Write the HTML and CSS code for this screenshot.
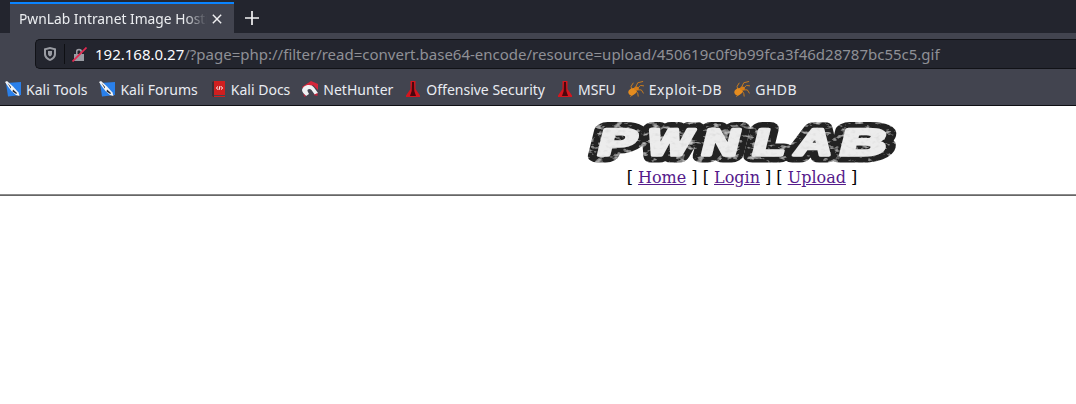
FILE: index.html
```html
<!DOCTYPE html>
<html lang="en">
<head>
<meta charset="utf-8">
<title>PwnLab Intranet Image Hosting</title>
<link rel="stylesheet" href="styles.css">
</head>
<body>
<svg class="defs" width="0" height="0" aria-hidden="true">
  <defs>
    <symbol id="kali" viewBox="0 0 16 16">
      <path d="M1 2 16 1 16 14 3 15.500Z" fill="#2a80ea"/>
      <path d="M0 1 2 0 8 5.500 13.500 11.500 14.500 15 11 14 6.500 10 3 5.500Z" fill="#f2f4f6"/>
      <path d="M2.500 2 6 6 5.800 7.500Z M8 8.500 12 12 11.300 13 7.500 10.500Z" fill="#23252e"/>
    </symbol>
    <symbol id="book" viewBox="0 0 16 16">
      <path d="M2 1 4 0H15V14H4V15H15V16H3L2 15Z" fill="#cf1f1f"/>
      <path d="M2 1 4 0V16H3L2 15Z" fill="#3a2e36"/>
      <path d="M8 5.500 6.300 7 8 8.500M11 5.500 12.700 7 11 8.500M10 5 9 9" fill="none" stroke="#fff" stroke-width="1"/>
    </symbol>
    <symbol id="hunter" viewBox="0 0 16 16">
      <path d="M0 6 9 0 16 3 16 9 11 4 3 9Z" fill="#d6263a"/>
      <path d="M0 9C1 4 9 2 12 6.500L16 12 13 14 9.500 9C8 7 5 8 5.500 10L7 13 4 15C2 13 0 11 0 9Z" fill="#f0f1f3"/>
      <path d="M1 12.500 4 15 2.500 16Z M11.500 14 15.500 12 15.500 15Z" fill="#c3213a"/>
    </symbol>
    <symbol id="tower" viewBox="0 0 16 16">
      <path d="M5.500 -1H10.500L10.500 8 15 14.500V16H1V14.500L5.500 8Z" fill="#d5151e"/>
      <path d="M7 1H9L9.300 10 11 15H5L6.700 10Z" fill="#4a070e"/>
    </symbol>
    <symbol id="spider" viewBox="0 0 18 18">
      <g fill="none" stroke="#c97d20" stroke-width="1.100">
        <path d="M8 8 11 2 17 .5M10 9 14 5 18 5.500M10 10 15 10 17.500 14M6 12 6 15 2.500 17.500M9 11 11 14 11.500 17.500M4 9 3.500 6 6 2"/>
      </g>
      <ellipse cx="5" cy="12" rx="4.800" ry="3.700" fill="#e58c1f" transform="rotate(-30 5 12)"/>
      <ellipse cx="9.500" cy="8.500" rx="2.800" ry="2.300" fill="#d67d18"/>
    </symbol>
    <filter id="grit" x="-5%" y="-10%" width="110%" height="120%">
      <feTurbulence type="fractalNoise" baseFrequency="0.11 0.2" numOctaves="3" seed="11" result="n"/>
      <feColorMatrix in="n" type="matrix" values="0 0 0 0 .55  0 0 0 0 .55  0 0 0 0 .55  3.500 0 0 0 -1.950" result="veins"/>
      <feComposite in="veins" in2="SourceAlpha" operator="in" result="marks"/>
      <feMerge><feMergeNode in="SourceGraphic"/><feMergeNode in="marks"/></feMerge>
    </filter>
    <filter id="scuff" x="-5%" y="-10%" width="110%" height="120%">
      <feTurbulence type="fractalNoise" baseFrequency="0.2 0.3" numOctaves="2" seed="4" result="n"/>
      <feColorMatrix in="n" type="matrix" values="0 0 0 0 .7  0 0 0 0 .7  0 0 0 0 .7  2 0 0 0 -1" result="marks0"/>
      <feComposite in="marks0" in2="SourceAlpha" operator="in" result="marks"/>
      <feMerge><feMergeNode in="SourceGraphic"/><feMergeNode in="marks"/></feMerge>
    </filter>
  </defs>
</svg>

<header class="browser">
  <div class="tabstrip">
    <div class="tab">
      <span class="tab-title">PwnLab Intranet Image Hosting</span>
      <svg class="tab-close" viewBox="0 0 12 12"><path d="M1 1 11 11M11 1 1 11"/></svg>
    </div>
    <svg class="new-tab" viewBox="0 0 14 14"><path d="M7 0V14M0 7H14"/></svg>
  </div>
  <div class="toolbar">
    <div class="urlbar">
      <svg class="shield" viewBox="0 0 12 14"><path fill-rule="evenodd" d="M6 0 12 1.600V7C12 10.500 9 13 6 14 3 13 0 10.500 0 7V1.600ZM6 2 2 3V7C2 9.300 4 11 6 11.900 8 11 10 9.300 10 7V3Z"/><path d="M4 4 8 4V7C8 8.200 7 9 6 9.500 5 9 4 8.200 4 7Z"/></svg>
      <span class="divider"></span>
      <svg class="lock" viewBox="0 0 15 15"><path d="M2 7H12V14H2Z M4 7V4C4 1 10 1 10 4V7H8.500V4.500C8.500 3 5.500 3 5.500 4.500V7Z" fill="#9a9ca3"/><path d="M.5 14.500 14.500 .5" stroke="#e22850" stroke-width="1.700"/></svg>
      <span class="url"><span class="url-host">192.168.0.27</span>/?page=php://filter/read=convert.base64-encode/resource=upload/450619c0f9b99fca3f46d28787bc55c5.gif</span>
    </div>
  </div>
  <nav class="bookmarks">
    <a class="bookmark"><svg class="bm-icon"><use href="#kali"/></svg>Kali Tools</a>
    <a class="bookmark"><svg class="bm-icon"><use href="#kali"/></svg>Kali Forums</a>
    <a class="bookmark"><svg class="bm-icon"><use href="#book"/></svg>Kali Docs</a>
    <a class="bookmark"><svg class="bm-icon"><use href="#hunter"/></svg>NetHunter</a>
    <a class="bookmark"><svg class="bm-icon"><use href="#tower"/></svg>Offensive Security</a>
    <a class="bookmark"><svg class="bm-icon"><use href="#tower"/></svg>MSFU</a>
    <a class="bookmark bookmark-spaced"><svg class="bm-icon"><use href="#spider"/></svg>Exploit-DB</a>
    <a class="bookmark bookmark-spaced"><svg class="bm-icon"><use href="#spider"/></svg>GHDB</a>
  </nav>
</header>

<main class="page">
  <div class="page-head">
    <svg class="logo" viewBox="0 0 312 46" role="img" aria-label="PWNLAB">
      <g filter="url(#grit)">
        <text class="logo-back" transform="translate(0 35) skewX(-14) translate(0 -35)"><tspan x="10" y="35.500" textLength="38" lengthAdjust="spacingAndGlyphs">P</tspan><tspan x="59" y="35.500" textLength="44" lengthAdjust="spacingAndGlyphs">W</tspan><tspan x="114" y="35.500" textLength="37" lengthAdjust="spacingAndGlyphs">N</tspan><tspan x="165" y="35.500" textLength="32" lengthAdjust="spacingAndGlyphs">L</tspan><tspan x="207" y="35.500" textLength="37" lengthAdjust="spacingAndGlyphs">A</tspan><tspan x="252" y="35.500" textLength="46" lengthAdjust="spacingAndGlyphs">B</tspan></text>
      </g>
      <g filter="url(#scuff)">
        <text class="logo-front" transform="translate(0 35) skewX(-14) translate(0 -35)"><tspan x="10" y="35.500" textLength="38" lengthAdjust="spacingAndGlyphs">P</tspan><tspan x="59" y="35.500" textLength="44" lengthAdjust="spacingAndGlyphs">W</tspan><tspan x="114" y="35.500" textLength="37" lengthAdjust="spacingAndGlyphs">N</tspan><tspan x="165" y="35.500" textLength="32" lengthAdjust="spacingAndGlyphs">L</tspan><tspan x="207" y="35.500" textLength="37" lengthAdjust="spacingAndGlyphs">A</tspan><tspan x="252" y="35.500" textLength="46" lengthAdjust="spacingAndGlyphs">B</tspan></text>
      </g>
    </svg>
    <div class="menu">[ <a href="#">Home</a> ] [ <a href="#">Login</a> ] [ <a href="#">Upload</a> ]</div>
  </div>
  <div class="rule"></div>
</main>
</body>
</html>
```
FILE: styles.css
```css
* { box-sizing: border-box; }
html, body { margin: 0; height: 100%; overflow: hidden; background: #fff; }
.defs { position: absolute; }

.browser { font-family: "Noto Sans", "Open Sans", sans-serif; color: #fbfbfe; }

.tabstrip {
  height: 33px;
  background: #23252e;
  display: flex;
  align-items: flex-start;
  padding: 2px 0 0 10px;
}
.tab {
  width: 224px;
  height: 31px;
  border-top: 2px solid #0a84ff;
  background: #42444f;
  display: flex;
  align-items: center;
  padding: 0 9px;
}
.tab-title {
  flex: 1;
  font-size: 13.800px;
  white-space: nowrap;
  overflow: hidden;
  -webkit-mask-image: linear-gradient(to right, #000 165px, transparent 188px);
  mask-image: linear-gradient(to right, #000 165px, transparent 188px);
  color: #eceef1;
}
.tab-close { width: 10px; height: 10px; fill: none; stroke: #f0f0f2; stroke-width: 1.700; margin-right: 3px; flex: none; }
.new-tab { width: 14px; height: 14px; margin: 9px 0 0 11px; fill: none; stroke: #f2f2f4; stroke-width: 1.700; flex: none; }

.toolbar {
  height: 38px;
  background: #42444f;
  padding: 6px 0 2px 35px;
}
.urlbar {
  height: 30px;
  background: #23252e;
  border: 1px solid #111217;
  border-right: 0;
  border-radius: 5px 0 0 5px;
  display: flex;
  align-items: center;
  padding-left: 8px;
  font-size: 15px;
  white-space: nowrap;
  overflow: hidden;
}
.shield { width: 12px; height: 14px; fill: #9a9ca3; flex: none; }
.divider { width: 1px; height: 20px; background: #0e0f13; margin: 0 7px 0 8px; flex: none; }
.lock { width: 15px; height: 15px; flex: none; }
.url { color: #8f9096; margin-left: 8px; }
.url-host { color: #fbfbfe; font-weight: 400; }

.bookmarks {
  height: 35px;
  background: #42444f;
  border-bottom: 1px solid #0e0f13;
  display: flex;
  align-items: center;
  padding: 2px 0 0 5px;
  font-size: 14px;
  gap: 12px;
  white-space: nowrap;
  color: #e9ecf2;
}
.bookmark { display: flex; align-items: center; gap: 5px; }
.bookmark-spaced { letter-spacing: 0.5px; }
.bm-icon { width: 16px; height: 16px; flex: none; }

.page { font-family: "DejaVu Serif", serif; color: #000; }
.page-head {
  width: 1484px;
  text-align: center;
  padding-top: 14px;
}
.logo { display: block; width: 312px; height: 46px; margin: 0 auto; }
.logo-back, .logo-front {
  font-family: "Liberation Sans", sans-serif;
  font-weight: 700;
  font-size: 37px;
}
.logo-back { fill: #222; stroke: #222; stroke-width: 15px; stroke-linejoin: round; }
.logo-front { fill: #ececec; stroke: #ececec; stroke-width: 3.500px; stroke-linejoin: round; }
.menu { font-size: 16px; line-height: 20px; margin-top: 2px; }
.menu a { color: #551a8b; }
.rule {
  height: 2px;
  margin-top: 6px;
  background: #666;
  border-top: 1px solid #8c8c8c;
}
```
